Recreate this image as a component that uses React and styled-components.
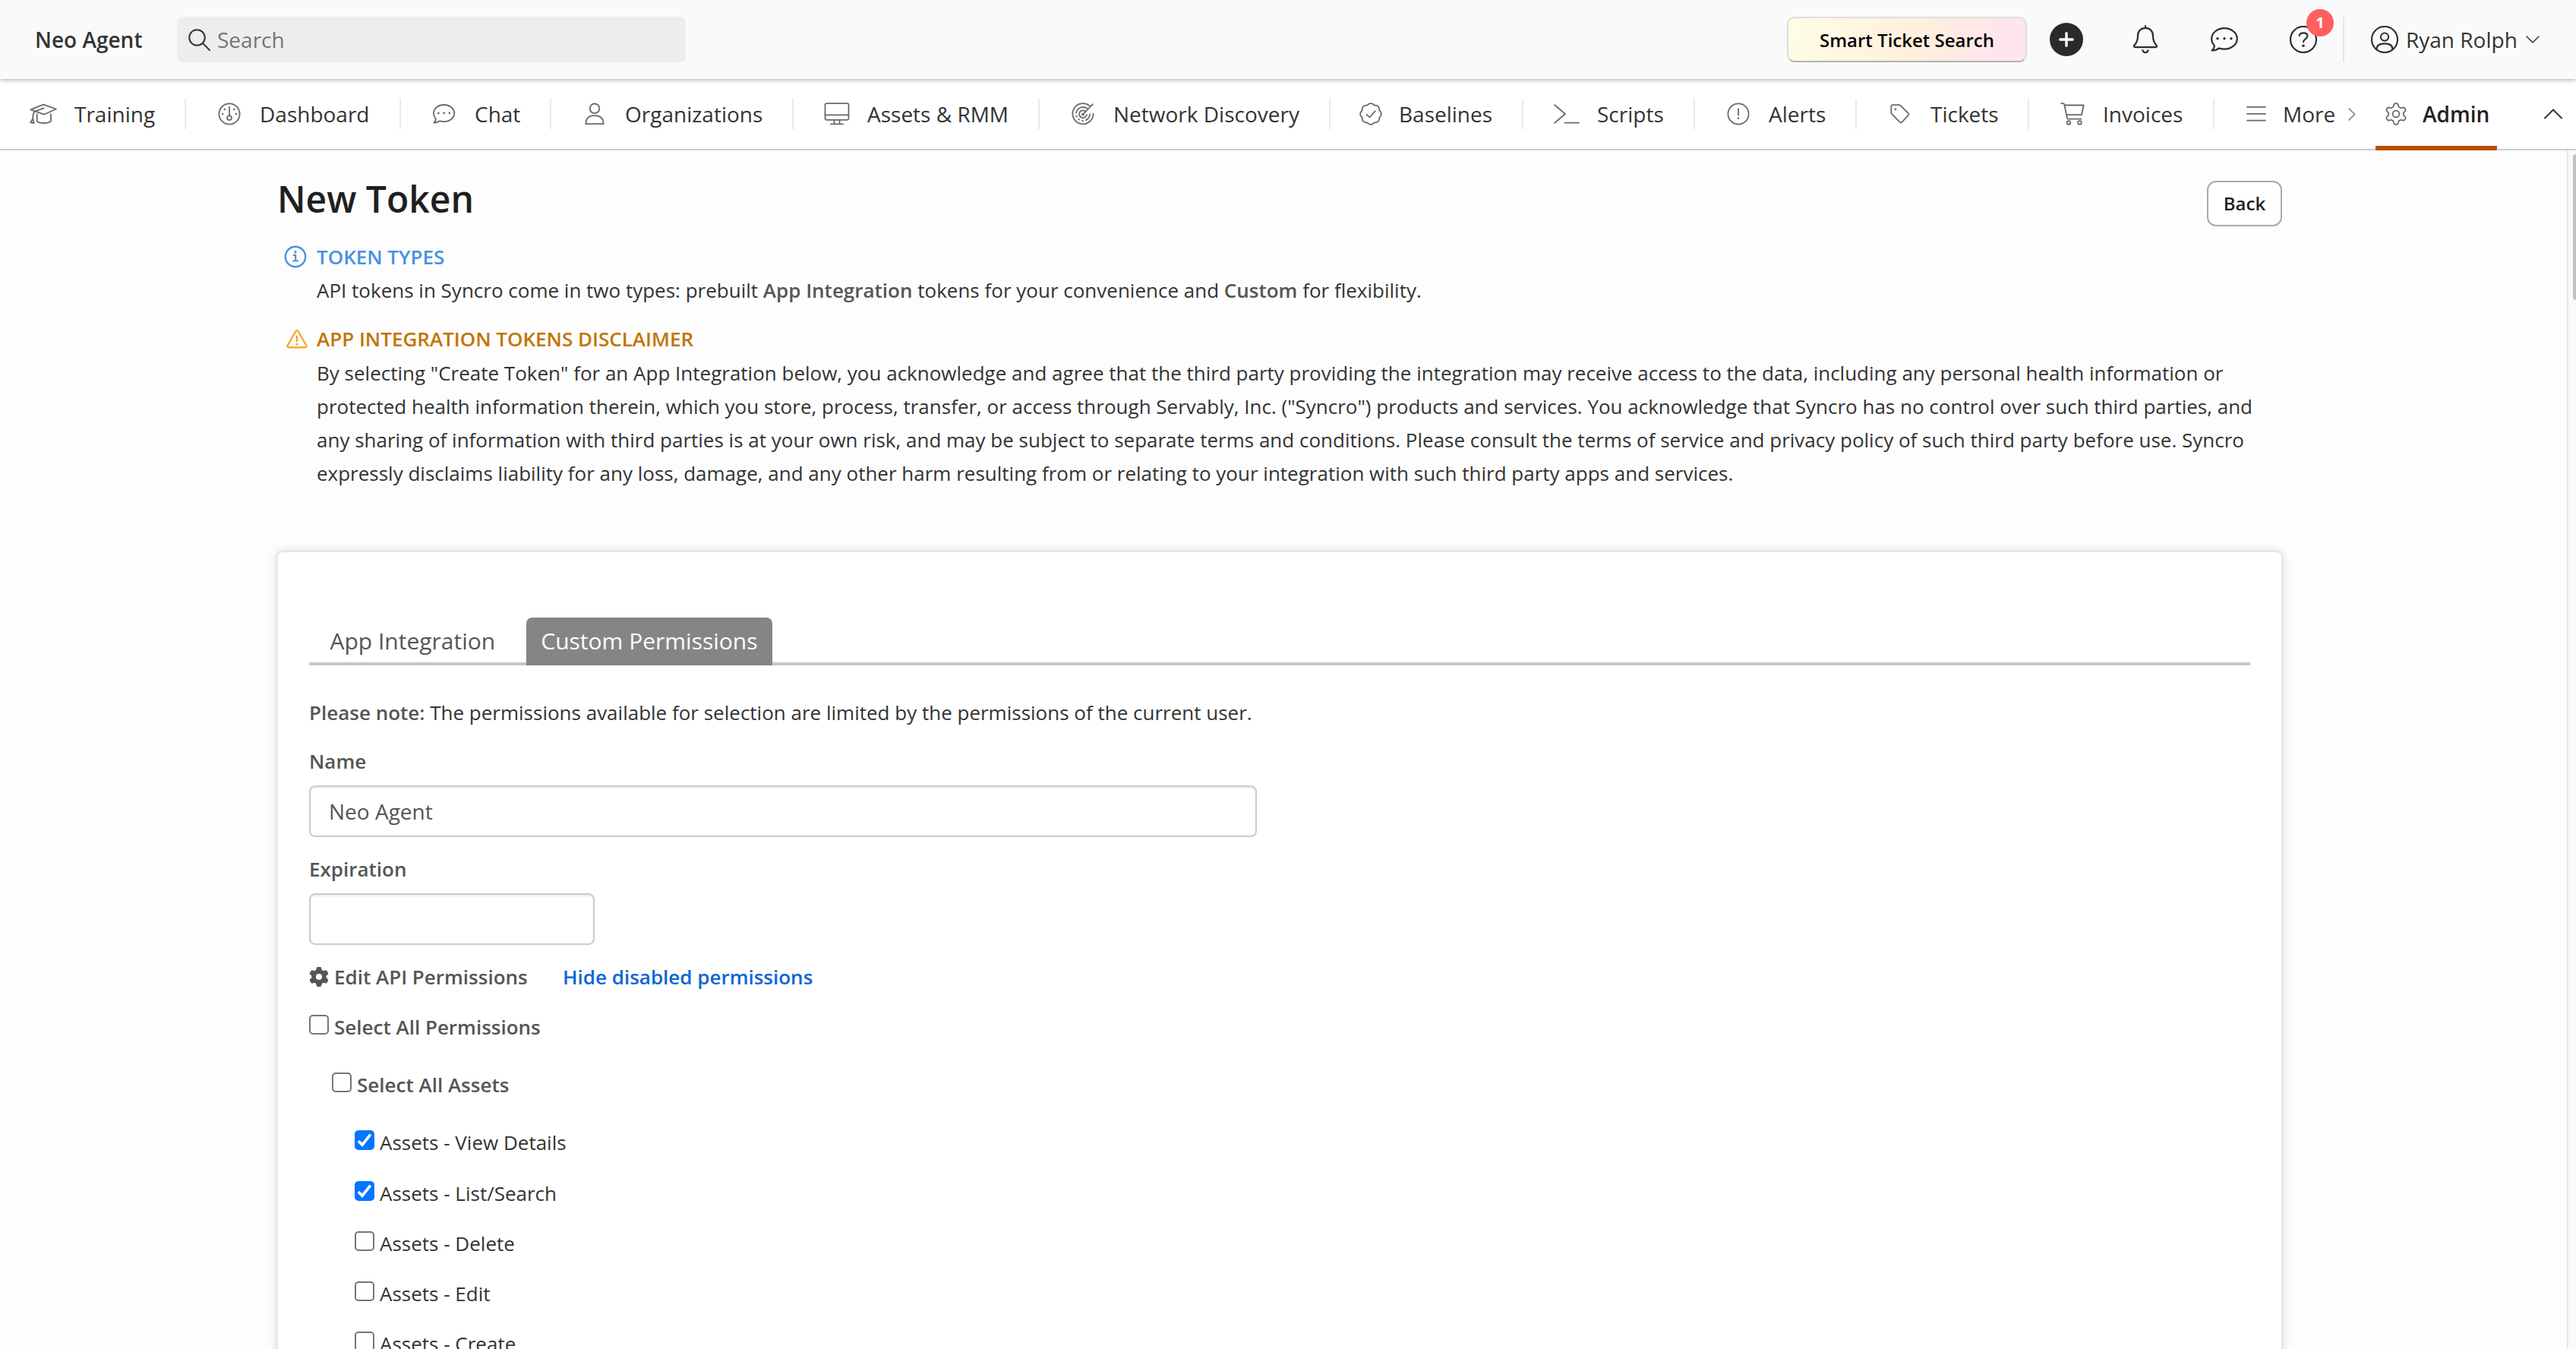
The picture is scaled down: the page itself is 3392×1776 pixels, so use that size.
import React from 'react';
import styled, { createGlobalStyle } from 'styled-components';
import { FaGear } from 'react-icons/fa6';

// closed outline whose radius varies with the angle, for the cog and the badge
const ring = (center, radius) => {
    const points = [];
    for (let i = 0; i < 180; i++) {
        const a = (i / 180) * Math.PI * 2;
        const r = radius(a);
        points.push(`${(center + r * Math.sin(a)).toFixed(2)} ${(center - r * Math.cos(a)).toFixed(2)}`);
    }
    return `M${points.join('L')}Z`;
}

const cogPath = ring(15, (a) => 11.8 + 2.2 * Math.tanh(1.6 * Math.cos(6 * a)));
const badgePath = ring(15, (a) => 12.2 + 1.6 * Math.abs(Math.cos(4 * a)));

const bubble = (
    <>
        <path d="M1.5 30.5C4 28.2 5 26 4.6 23.6C2.3 21.2 1.2 18 1.2 15C1.2 7.4 8.7 1.2 18 1.2S34.8 7.4 34.8 15S27.3 28.6 18 28.6C15.5 28.6 13.2 28.2 11.2 27.4C8.4 29.6 5 30.5 1.5 30.5Z" />
        <path d="M9 14.8h.01M18 14.8h.01M27 14.8h.01" strokeWidth="3.4" />
    </>
)

const icons = {
    search: { w: 29, h: 29, art: <><circle cx="11.5" cy="11.5" r="10.3" /><path d="M19 19l9 9" /></> },
    bell: {
        w: 34, h: 38,
        art: <><path d="M17 1.2v2.6M17 3.8C11 3.8 7 8.3 7 14c0 7.5-1.8 9.6-3.8 11.6c-2 2-1.6 3.6.6 3.6h26.400c2.200 0 2.600-1.600.6-3.600c-2-2-3.800-4.100-3.800-11.600C27 8.300 23 3.800 17 3.800Z" /><path d="M13.400 33.200a3.700 3.700 0 0 0 7.200 0" /></>,
    },
    bubble: { w: 36, h: 32, art: bubble },
    help: {
        w: 36, h: 36,
        art: <><circle cx="18" cy="18" r="17" /><path d="M12.800 13c.2-2.500 2.200-3.700 5.200-3.700c3.200 0 5.400 1.500 5.400 4c0 4.200-5.300 3.800-5.300 8" /><path d="M18 26.200h.01" strokeWidth="3.600" /></>,
    },
    user: {
        w: 36, h: 36,
        art: <><circle cx="18" cy="18" r="17" /><circle cx="18" cy="14.600" r="5.100" /><path d="M7.400 31.200c0-5.600 4.800-7.900 10.600-7.900s10.600 2.300 10.600 7.900" /></>,
    },
    cap: {
        w: 36, h: 30,
        art: <><path d="M1.300 9.300L18 2.700L34.900 8.500L19 15.700L1.300 9.300Z" /><path d="M18.500 7.300L6 12.200C4.400 15 4.300 17.500 4.300 21L1.200 26.300L5.600 27L4.300 21" /><path d="M9.700 15.500V24.600C13 27.800 24.500 27.800 28 24.600V15.200" /></>,
    },
    gauge: {
        w: 30, h: 30,
        art: <><circle cx="15" cy="15" r="13.600" /><path d="M15 5.800v11.400" /><circle cx="15" cy="20.300" r="2.900" /><path d="M9 9h.01M21.200 9h.01M6.300 15h.01M23.900 15h.01" strokeWidth="2.600" /></>,
    },
    chat: { w: 36, h: 32, scale: 0.81, art: bubble },
    person: {
        w: 26, h: 30,
        art: <><circle cx="13" cy="7.800" r="6.300" /><path d="M1.400 28.200C1.400 21 5.800 17.200 13 17.200S24.600 21 24.600 28.200Z" /></>,
    },
    monitor: {
        w: 34, h: 30,
        art: <><rect x="1.500" y="1.200" width="31" height="21.600" rx="2.200" /><path d="M1.500 16.300h31M13.500 22.800v5.400M20.500 22.800v5.400M9 28.400h16" /></>,
    },
    radar: {
        w: 30, h: 30,
        art: (
            <>
                <path d="M23.700 4.300A13.600 13.600 0 1 0 28.600 15" />
                <path d="M20.300 7.800A9 9 0 0 0 6.100 13.600M24 15.500A9 9 0 0 1 19 23.100" />
                <path d="M6.600 18.200h.01M9.600 22.200h.01M14.600 24.100h.01" strokeWidth="2.400" />
                <path d="M17.300 10.900A4.900 4.900 0 1 0 19.900 15.800M15 15.600L28 2.200" />
                <circle cx="15" cy="15.600" r="1" />
            </>
        ),
    },
    badge: { w: 30, h: 30, art: <><path d={badgePath} /><path d="M9.500 15.800l4 3.600l7.300-8.200" /></> },
    prompt: { w: 34, h: 26, art: <path d="M1.200 1.200L15 13L1.200 24.800M14.500 24.600H33" /> },
    alert: {
        w: 30, h: 30,
        art: <><circle cx="15" cy="15" r="13.600" /><path d="M15 8.300v8.400" /><path d="M15 20.800h.01" strokeWidth="2.600" /></>,
    },
    tag: {
        w: 26, h: 26,
        art: <><path d="M3.200 1.200H11.500C12.300 1.200 13 1.500 13.600 2.100L23.600 11.800C24.700 12.900 24.700 13.800 23.600 14.900L15.500 23.600C14.500 24.700 13.400 24.700 12.400 23.600L2.400 13.400C1.800 12.700 1.300 12 1.300 11.200V3.200C1.300 2 2 1.200 3.200 1.200Z" /><path d="M7 6.900h.01" strokeWidth="2.800" /></>,
    },
    cart: {
        w: 32, h: 30,
        art: <><path d="M1.200 1.200H3.600C4.500 1.200 5 1.700 5.200 2.500L9 20.500C9.200 21.300 9.700 21.700 10.500 21.700H27.500M5.500 3.500H30.600L28 16.200H8.100" /><circle cx="11" cy="26.500" r="2.300" /><circle cx="25.500" cy="26.500" r="2.300" /></>,
    },
    menu: { w: 26, h: 22, art: <path d="M1 1.900h24M1 10.800h24M1 19.600h24" /> },
    cog: { w: 30, h: 30, art: <><path d={cogPath} /><circle cx="15" cy="15" r="4.400" /></> },
    right: { w: 10, h: 17, art: <path d="M1 1l7.600 7.500L1 16" /> },
    down: { w: 18, h: 10, art: <path d="M1 1l8 8l8-8" /> },
    up: { w: 24, h: 14, art: <path d="M1 12.500L12 1.500L23 12.500" /> },
    info: {
        w: 30, h: 30,
        art: <><circle cx="15" cy="15" r="13.200" /><path d="M12.800 12.900h2.400v7.400M12 20.500h6.200" strokeWidth="2.200" /><path d="M15 8.800h.01" strokeWidth="3.400" /></>,
    },
    warning: {
        w: 28, h: 25,
        art: <><path d="M12.300 2.200C13 1 15 1 15.700 2.200L26.300 20.700C27 22 26.200 23.400 24.700 23.400H3.300C1.800 23.400 1 22 1.700 20.700Z" /><path d="M14 8.700v6.300" /><path d="M14 19.300h.01" strokeWidth="2.900" /></>,
    },
}

const Icon = ({ name, stroke = 2 }) => {
    const { w, h, art, scale = 1 } = icons[name];
    return (
        <svg
            width={w * scale}
            height={h * scale}
            viewBox={`0 0 ${w} ${h}`}
            fill="none"
            stroke="currentColor"
            strokeWidth={stroke}
            strokeLinecap="round"
            strokeLinejoin="round"
        >
            {art}
        </svg>
    )
}

const navItems = [
    { label: 'Training', icon: 'cap', width: 245, inset: 39, gap: 23 },
    { label: 'Dashboard', icon: 'gauge', width: 283 },
    { label: 'Chat', icon: 'chat', width: 198 },
    { label: 'Organizations', icon: 'person', width: 319 },
    { label: 'Assets & RMM', icon: 'monitor', width: 324 },
    { label: 'Network Discovery', icon: 'radar', width: 383 },
    { label: 'Baselines', icon: 'badge', width: 254, inset: 35, gap: 19 },
    { label: 'Scripts', icon: 'prompt', width: 226 },
    { label: 'Alerts', icon: 'alert', width: 213 },
    { label: 'Tickets', icon: 'tag', width: 227 },
    { label: 'Invoices', icon: 'cart', width: 244 },
]

const permissions = [
    { label: 'Assets - View Details', checked: true },
    { label: 'Assets - List/Search', checked: true },
    { label: 'Assets - Delete' },
    { label: 'Assets - Edit' },
    { label: 'Assets - Create' },
]

const Permission = ({ label, checked, bold, indent }) => (
    <PermissionRow $indent={indent} $bold={bold}>
        <Checkbox $checked={checked}>
            {checked && (
                <svg width="26" height="26" viewBox="0 0 26 26" fill="none" stroke="white" strokeWidth="3.600">
                    <path d="M4.800 13.900l5.200 5.300L20.800 5.600" />
                </svg>
            )}
        </Checkbox>
        {label}
    </PermissionRow>
)

const App = () => {
    return (
        <Page>
            <GlobalStyle />
            <Header>
                <Brand>Neo Agent</Brand>
                <SearchBar>
                    <Icon name="search" />
                    <span>Search</span>
                </SearchBar>
                <SmartSearch>Smart Ticket Search</SmartSearch>
                <HeaderAction>
                    <AddButton>
                        <svg width="20" height="20" viewBox="0 0 20 20" stroke="white" strokeWidth="3.400" strokeLinecap="round">
                            <path d="M10 1.800v16.400M1.800 10h16.400" />
                        </svg>
                    </AddButton>
                </HeaderAction>
                <HeaderAction><Icon name="bell" stroke={2.2} /></HeaderAction>
                <HeaderAction><Icon name="bubble" stroke={2.2} /></HeaderAction>
                <HeaderAction>
                    <Icon name="help" stroke={2.2} />
                    <Count>1</Count>
                </HeaderAction>
                <UserMenu>
                    <Icon name="user" stroke={2.2} />
                    <UserName>Ryan Rolph</UserName>
                    <Icon name="down" stroke={1.5} />
                </UserMenu>
            </Header>
            <Nav>
                {navItems.map((item) => (
                    <NavItem key={item.label} $width={item.width} $inset={item.inset} $gap={item.gap}>
                        <NavIcon><Icon name={item.icon} stroke={item.icon === 'chat' ? 2.3 : 1.8} /></NavIcon>
                        {item.label}
                    </NavItem>
                ))}
                <MoreItem>
                    <NavIcon><Icon name="menu" stroke={1.8} /></NavIcon>
                    More
                    <MoreArrow><Icon name="right" stroke={1.5} /></MoreArrow>
                </MoreItem>
                <AdminItem>
                    <NavIcon><Icon name="cog" stroke={1.8} /></NavIcon>
                    Admin
                </AdminItem>
                <Collapse><Icon name="up" stroke={2} /></Collapse>
            </Nav>
            <Main>
                <Content>
                    <TitleRow>
                        <Title>New Token</Title>
                        <BackButton>Back</BackButton>
                    </TitleRow>
                    <Notice>
                        <NoticeIcon $color="#4a90e2"><Icon name="info" stroke={2.4} /></NoticeIcon>
                        <NoticeTitle $color="#4a90e2">TOKEN TYPES</NoticeTitle>
                        <NoticeText>
                            API tokens in Syncro come in two types: prebuilt <Strong>App Integration</Strong> tokens for
                            your convenience and <Strong>Custom</Strong> for flexibility.
                        </NoticeText>
                    </Notice>
                    <Notice>
                        <NoticeIcon $color="#ff9f1a" $shift><Icon name="warning" stroke={2.2} /></NoticeIcon>
                        <NoticeTitle $color="#c27400">APP INTEGRATION TOKENS DISCLAIMER</NoticeTitle>
                        <NoticeText $drop>
                            By selecting "Create Token" for an App Integration below, you acknowledge and agree that the
                            third party providing the integration may receive access to the data, including any personal
                            health information or protected health information therein, which you store, process,
                            transfer, or access through Servably, Inc. ("Syncro") products and services. You acknowledge
                            that Syncro has no control over such third parties, and any sharing of information with third
                            parties is at your own risk, and may be subject to separate terms and conditions. Please
                            consult the terms of service and privacy policy of such third party before use. Syncro
                            expressly disclaims liability for any loss, damage, and any other harm resulting from or
                            relating to your integration with such third party apps and services.
                        </NoticeText>
                    </Notice>
                    <Card>
                        <Tabs>
                            <Tab>App Integration</Tab>
                            <Tab $active>Custom Permissions</Tab>
                        </Tabs>
                        <Note>
                            <Strong>Please note:</Strong> The permissions available for selection are limited by the
                            permissions of the current user.
                        </Note>
                        <Label>Name</Label>
                        <Field $width="1248px">Neo Agent</Field>
                        <Label>Expiration</Label>
                        <Field $width="376px" />
                        <EditRow>
                            <FaGear size={26} />
                            <span>Edit API Permissions</span>
                            <HideLink>Hide disabled permissions</HideLink>
                        </EditRow>
                        <Permission label="Select All Permissions" bold indent={0} />
                        <Permission label="Select All Assets" bold indent={30} />
                        <PermissionList>
                            {permissions.map((p) => (
                                <Permission key={p.label} label={p.label} checked={p.checked} indent={60} />
                            ))}
                        </PermissionList>
                    </Card>
                </Content>
                <Scrollbar>
                    <Thumb />
                </Scrollbar>
            </Main>
        </Page>
    )
}

export default App;

const GlobalStyle = createGlobalStyle`
    * {
        box-sizing: border-box;
    }
    body {
        margin: 0;
        font-family: "Open Sans", "Noto Sans", sans-serif;
        color: #333;
    }
    svg {
        display: block;
        flex-shrink: 0;
    }
`

const Page = styled.div`
    display: flex;
    flex-direction: column;
    width: 3392px;
    height: 1776px;
    overflow: hidden;
    background: #fdfdfd;
`

const Header = styled.header`
    display: flex;
    align-items: center;
    flex-shrink: 0;
    height: 104px;
    background: #fafafa;
    box-shadow: 0 1px 6px rgba(0, 0, 0, 0.35);
    position: relative;
    z-index: 1;
    font-size: 28px;
`

const Brand = styled.div`
    width: 233px;
    padding-left: 46px;
    font-weight: 600;
`

const SearchBar = styled.div`
    display: flex;
    align-items: center;
    gap: 9px;
    width: 670px;
    height: 60px;
    padding-left: 15px;
    border-radius: 8px;
    background: #ededed;

    span {
        color: #757575;
    }
`

const SmartSearch = styled.button`
    width: 316px;
    height: 60px;
    margin-left: auto;
    padding: 0;
    border: 2px solid #dedede;
    border-bottom-color: #b2b2b2;
    border-radius: 10px;
    background: linear-gradient(100deg, #fffde6 0%, #ffeedd 60%, #ffe6ec 85%);
    font-family: inherit;
    font-size: 24px;
    font-weight: 600;
    color: #000;
`

const HeaderAction = styled.div`
    display: flex;
    align-items: center;
    justify-content: center;
    width: 104px;
    height: 60px;
    position: relative;
    color: #2e2e2e;
`

const AddButton = styled.div`
    display: flex;
    align-items: center;
    justify-content: center;
    width: 44px;
    height: 44px;
    border-radius: 50%;
    background: #2a2a2a;
`

const Count = styled.div`
    position: absolute;
    top: -10px;
    left: 56px;
    width: 36px;
    height: 36px;
    border-radius: 50%;
    background: #ff5f5f;
    color: white;
    font-size: 20px;
    font-weight: 700;
    line-height: 36px;
    text-align: center;
`

const UserMenu = styled.div`
    display: flex;
    align-items: center;
    width: 307px;
    height: 60px;
    padding-left: 35px;
    border-left: 2px solid #e6e6e6;
`

const UserName = styled.span`
    width: 158px;
    margin-left: 10px;
`

const Nav = styled.nav`
    display: flex;
    align-items: center;
    flex-shrink: 0;
    height: 94px;
    border-bottom: 2px solid #ccc;
    background: white;
    font-size: 28px;
    white-space: nowrap;
`

const NavItem = styled.div`
    display: flex;
    align-items: center;
    gap: ${({ $gap = 22 }) => $gap}px;
    flex-shrink: 0;
    width: ${({ $width }) => $width}px;
    height: 40px;
    padding-left: ${({ $inset = 39 }) => $inset}px;
    border-right: 2px solid #e9e9e9;
`

const NavIcon = styled.span`
    display: flex;
    justify-content: center;
    width: 36px;
    color: #6a6a6a;
`

const MoreItem = styled(NavItem).attrs({ $width: 212, $inset: 37, $gap: 17 })`
    border-right: none;
`

const MoreArrow = styled.span`
    color: #777;
`

const AdminItem = styled.div`
    display: flex;
    align-items: center;
    gap: 17px;
    width: 160px;
    height: 94px;
    margin-bottom: -2px;
    padding: 4px 0 0 9px;
    border-bottom: 6px solid #b84e00;
    border-radius: 2px;
    font-weight: 600;
    color: #1f1f1f;
`

const Collapse = styled.div`
    margin-left: 62px;
`

const Main = styled.main`
    display: flex;
    justify-content: space-between;
    flex: 1;
    min-height: 0;
`

const Content = styled.div`
    width: 3006px;
    padding: 40px 0 0 364px;
`

const TitleRow = styled.div`
    display: flex;
    align-items: flex-start;
    justify-content: space-between;
    height: 60px;
    margin-bottom: 18px;
    padding: 0 1px;
`

const Title = styled.h1`
    margin: 0;
    font-size: 48px;
    font-weight: 600;
    line-height: 47px;
    color: #1f1f1f;
`

const BackButton = styled.button`
    width: 99px;
    height: 60px;
    padding: 0 0 1px;
    border: 2px solid #a9a9a9;
    border-radius: 12px;
    background: white;
    font-family: inherit;
    font-size: 24px;
    font-weight: 600;
    color: #1f1f1f;
`

const Notice = styled.section`
    display: grid;
    grid-template-columns: 53px 1fr;
    margin-bottom: 20px;
    font-size: 26px;
    line-height: 44px;
`

const NoticeIcon = styled.div`
    display: flex;
    align-items: center;
    padding-left: ${({ $shift }) => $shift ? '13px' : '9.5px'};
    color: ${({ $color }) => $color};
`

const NoticeTitle = styled.div`
    font-weight: 600;
    color: ${({ $color }) => $color};
`

const NoticeText = styled.p`
    grid-column: 2;
    margin: 0;
    padding-top: ${({ $drop }) => $drop ? '1px' : 0};
`

const Strong = styled.strong`
    font-weight: 600;
    color: #555;
`

const Card = styled.div`
    height: 1300px;
    margin-top: 80px;
    padding: 86px 41px 0;
    border: 2px solid #e6e6e6;
    border-radius: 8px;
    background: white;
    box-shadow: 0 0 12px rgba(0, 0, 0, 0.14);
    font-size: 26px;
    line-height: 44px;
`

const Tabs = styled.div`
    display: flex;
    gap: 21px;
    height: 63px;
    padding-left: 8px;
    border-bottom: 4px solid #c8c8c8;
`

const Tab = styled.div`
    height: 63px;
    padding: 0 19.5px;
    border-radius: 8px 8px 0 0;
    background: ${({ $active }) => $active ? '#858585' : 'transparent'};
    color: ${({ $active }) => $active ? 'white' : '#555'};
    font-size: 30px;
    line-height: 61px;
`

const Note = styled.p`
    margin: 40px 0 0;
`

const Label = styled.div`
    margin: 20px 0 10px;
    font-weight: 600;
    color: #555;
`

const Field = styled.div`
    width: ${({ $width }) => $width};
    height: 68px;
    padding-left: 24px;
    border: 2px solid #ccc;
    border-radius: 8px;
    background: white;
    box-shadow: inset 0 2px 3px rgba(0, 0, 0, 0.08);
    font-size: 28px;
    line-height: 64px;
    color: #555;
`

const EditRow = styled.div`
    display: flex;
    align-items: center;
    height: 44px;
    margin: 20px 0 11px;
    font-weight: 600;
    color: #555;

    span {
        width: 301px;
        margin-left: 7px;
    }
`

const HideLink = styled.a`
    color: #0a66d6;
`

const PermissionRow = styled.div`
    display: flex;
    align-items: center;
    gap: 7px;
    height: 66px;
    margin-bottom: ${({ $bold }) => $bold ? '10px' : 0};
    padding-left: ${({ $indent }) => $indent}px;
    font-weight: ${({ $bold }) => $bold ? 600 : 400};
    color: ${({ $bold }) => $bold ? '#555' : '#333'};
`

const PermissionList = styled.div`
    > :first-child {
        margin-bottom: 1px;
    }
`

const Checkbox = styled.span`
    width: 26px;
    height: 26px;
    margin-bottom: 6px;
    border: ${({ $checked }) => $checked ? 'none' : '2px solid #767676'};
    border-radius: 5px;
    background: ${({ $checked }) => $checked ? '#0075ff' : 'white'};
`

const Scrollbar = styled.div`
    width: 12px;
    padding: 5px 0 0 6px;
    border-left: 2px solid #e8e8e8;
    background: #fafafa;
`

const Thumb = styled.div`
    height: 192px;
    border-radius: 8px 0 0 8px;
    background: #c1c1c1;
`
